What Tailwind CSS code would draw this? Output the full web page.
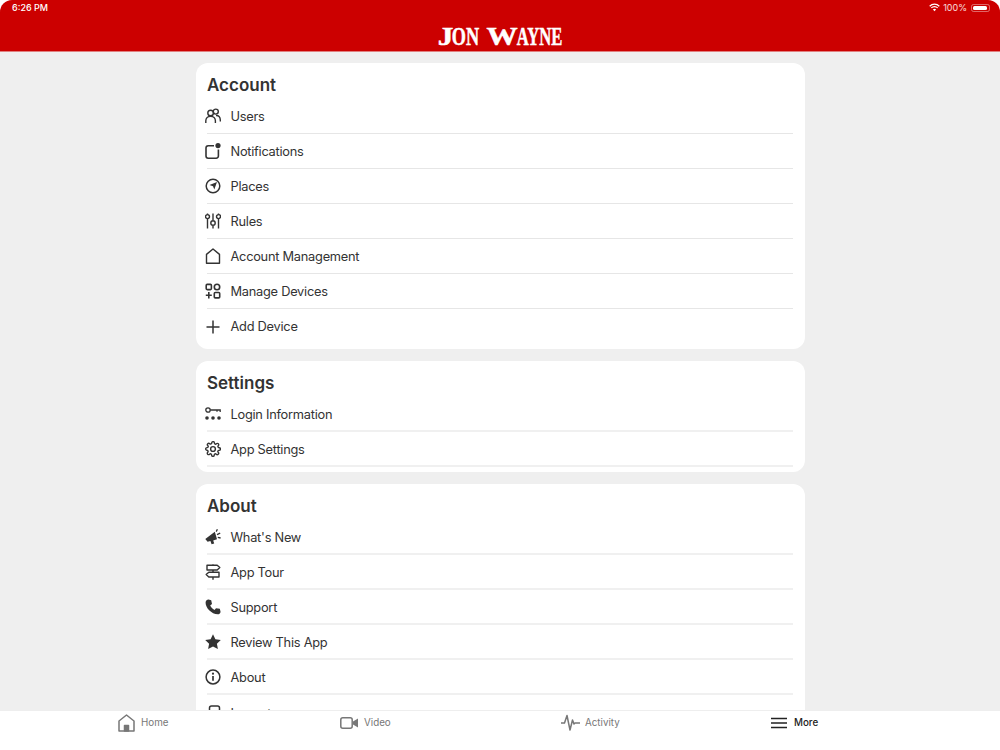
<!DOCTYPE html>
<html>
<head>
<meta charset="utf-8">
<script src="https://cdn.jsdelivr.net/npm/@tailwindcss/browser@4"></script>
</head>
<body class="bg-white">
<div class="w-[1000px] h-[750px] flex flex-col overflow-hidden font-['Inter',sans-serif] text-[#333333]">
  <header class="relative h-[52px] shrink-0 bg-[#cc0000] rounded-t-[12px] border-b border-[#e08080] text-white">
    <div class="flex justify-between items-center h-[14px] pt-[1px] pl-[12px] pr-[10px] text-[9px] font-medium">
      <span>6:26 PM</span>
      <div class="flex items-center gap-[3px]">
        <svg width="11" height="9" viewBox="0 0 11 9" fill="none" stroke="#fff" stroke-width="1.3"><path d="M.7 3.2a6.8 6.8 0 0 1 9.6 0M2.3 4.900a4.500 4.500 0 0 1 6.400 0"/><path d="M3.900 6.500a2.200 2.200 0 0 1 3.200 0L5.500 8.200z" fill="#fff" stroke="none"/></svg>
        <span class="font-normal text-white/85">100%</span>
        <div class="w-[19px] h-[8px] p-[1px] pr-[2px] rounded-[2.5px] border border-white/40 ml-[1px]"><div class="w-full h-full rounded-[1.5px] bg-white"></div></div>
      </div>
    </div>
    <div class="flex justify-center items-center mt-[11px] h-[24px] font-['Liberation_Serif',serif] font-bold text-[26px] leading-[24px] whitespace-nowrap [-webkit-text-stroke:0.5px_white]">
      <span class="w-[15px] flex justify-center"><span class="flex-none scale-x-[1.2]">J</span></span>
      <span class="w-[26px] flex justify-center"><span class="flex-none scale-x-[.7]">ON</span></span>
      <span class="w-[8px]"></span>
      <span class="w-[30px] flex justify-center"><span class="flex-none scale-x-[1.2]">W</span></span>
      <span class="w-[46px] flex justify-center"><span class="flex-none scale-x-[.64]">AYNE</span></span>
    </div>
  </header>

  <main class="flex-1 min-h-0 overflow-hidden bg-[#efefef] pt-[11px]">
    <div class="w-[609px] mx-auto flex flex-col gap-[12px]">

      <section class="bg-white rounded-[12px] px-[11px] pr-[12px] pb-[5px]">
        <h2 class="h-[36px] pt-[10px] pl-[.5px] text-[17px] leading-[24px] font-semibold">Account</h2>
        <div class="flex items-center h-[35px] border-b border-[#e6e6e6]">
          <svg class="w-[16px] h-[16px] mr-[10px] -ml-[2px] shrink-0" viewBox="0 0 16 16" fill="none" stroke="#333" stroke-width="1.4"><circle cx="5.600" cy="5" r="2.800"/><circle cx="10.800" cy="3.600" r="2.500"/><path d="M.8 15v-2.200c0-2.600 2-4.600 4.800-4.600s4.800 2 4.800 4.600V15M11 7.500c2.500-.3 4.300 1.600 4.300 4.500v1.600"/></svg>
          <span class="pt-[2px] text-[12.800px] tracking-[-0.25px]">Users</span>
        </div>
        <div class="flex items-center h-[35px] border-b border-[#e6e6e6]">
          <svg class="w-[16px] h-[16px] mr-[10px] -ml-[2px] shrink-0" viewBox="0 0 16 16" fill="none" stroke="#333" stroke-width="1.600"><path d="M9 2.800H3.200A2.200 2.200 0 0 0 1 5v8a2.200 2.200 0 0 0 2.200 2.200h8A2.200 2.200 0 0 0 13.400 13V6.500"/><circle cx="13" cy="2.600" r="2.600" fill="#333" stroke="none"/></svg>
          <span class="pt-[2px] text-[12.800px] tracking-[-0.25px]">Notifications</span>
        </div>
        <div class="flex items-center h-[35px] border-b border-[#e6e6e6]">
          <svg class="w-[16px] h-[16px] mr-[10px] -ml-[2px] shrink-0" viewBox="0 0 16 16" fill="none" stroke="#333" stroke-width="1.500"><circle cx="8" cy="8" r="6.800"/><path d="M12 4 9.300 11.500 8 8.200 4.500 7z" fill="#333" stroke="none"/></svg>
          <span class="pt-[2px] text-[12.800px] tracking-[-0.25px]">Places</span>
        </div>
        <div class="flex items-center h-[35px] border-b border-[#e6e6e6]">
          <svg class="w-[16px] h-[16px] mr-[10px] -ml-[2px] shrink-0" viewBox="0 0 16 16" fill="none" stroke="#333" stroke-width="1.400"><path d="M2.500 6V15.500M8 .5v6.500M8 13V15.500M13.500 6V15.500M2.500 .5v1M13.500 .5v1"/><circle cx="2.500" cy="3.600" r="2"/><circle cx="8" cy="10" r="2.200"/><circle cx="13.500" cy="3.600" r="2"/></svg>
          <span class="pt-[2px] text-[12.800px] tracking-[-0.25px]">Rules</span>
        </div>
        <div class="flex items-center h-[35px] border-b border-[#e6e6e6]">
          <svg class="w-[16px] h-[16px] mr-[10px] -ml-[2px] shrink-0" viewBox="0 0 16 16" fill="none" stroke="#333" stroke-width="1.400" stroke-linejoin="round"><path d="M1.500 15.200V6.400L8 1l6.500 5.400v8.800z"/></svg>
          <span class="pt-[2px] text-[12.800px] tracking-[-0.25px]">Account Management</span>
        </div>
        <div class="flex items-center h-[35px] border-b border-[#e6e6e6]">
          <svg class="w-[16px] h-[16px] mr-[10px] -ml-[2px] shrink-0" viewBox="0 0 16 16" fill="none" stroke="#333" stroke-width="1.600"><rect x="1.200" y="1.400" width="5.200" height="5.200" rx="1"/><circle cx="12" cy="4" r="2.700"/><rect x="9.300" y="9.500" width="5.400" height="5.400" rx="1"/><path d="M3.800 9v6.500M.8 12.200h6"/></svg>
          <span class="pt-[2px] text-[12.800px] tracking-[-0.25px]">Manage Devices</span>
        </div>
        <div class="flex items-center h-[35px]">
          <svg class="w-[16px] h-[16px] mr-[10px] -ml-[2px] shrink-0" viewBox="0 0 16 16" fill="none" stroke="#333" stroke-width="1.500"><path d="M8 1.500v13M1.500 8h13"/></svg>
          <span class="pt-[1px] text-[12.800px] tracking-[-0.25px]">Add Device</span>
        </div>
      </section>

      <section class="bg-white rounded-[12px] px-[11px] pr-[12px] pb-[5px]">
        <h2 class="h-[36px] pt-[10px] pl-[.5px] text-[17px] leading-[24px] font-semibold">Settings</h2>
        <div class="flex items-center h-[35px] border-b-2 border-[#f0f0f0]">
          <svg class="w-[16px] h-[16px] mr-[10px] -ml-[2px] shrink-0" viewBox="0 0 16 16" fill="none" stroke="#333" stroke-width="1.300"><circle cx="3" cy="4" r="2.200"/><path d="M5.200 4h10v2M12 4v1.800"/><g fill="#333" stroke="none"><circle cx="2" cy="12" r="1.800"/><circle cx="8" cy="12" r="1.800"/><circle cx="14" cy="12" r="1.800"/></g></svg>
          <span class="pt-[2px] text-[12.800px] tracking-[-0.25px]">Login Information</span>
        </div>
        <div class="flex items-center h-[35px] border-b-2 border-[#f0f0f0]">
          <svg class="w-[16px] h-[16px] mr-[10px] -ml-[2px] shrink-0" viewBox="0 0 24 24" fill="none" stroke="#333" stroke-width="2.100" stroke-linejoin="round"><circle cx="12" cy="12" r="3.600"/><path d="M19.400 15a1.700 1.700 0 0 0 .3 1.800l.1.100a2 2 0 1 1-2.900 2.900l-.1-.1a1.700 1.700 0 0 0-2.900 1.200V21a2 2 0 1 1-4 0v-.1a1.700 1.700 0 0 0-2.900-1.200l-.1.100a2 2 0 1 1-2.900-2.900l.1-.1a1.700 1.700 0 0 0-1.200-2.900H3a2 2 0 1 1 0-4h.1a1.700 1.700 0 0 0 1.200-2.900l-.1-.1a2 2 0 1 1 2.900-2.900l.1.100a1.700 1.700 0 0 0 2.900-1.200V3a2 2 0 1 1 4 0v.1a1.700 1.700 0 0 0 2.900 1.200l.1-.1a2 2 0 1 1 2.900 2.900l-.1.100a1.700 1.700 0 0 0 1.200 2.900h.1a2 2 0 1 1 0 4h-.1a1.700 1.700 0 0 0-1.700 1z"/></svg>
          <span class="pt-[2px] text-[12.800px] tracking-[-0.25px]">App Settings</span>
        </div>
      </section>

      <section class="bg-white rounded-[12px] px-[11px] pr-[12px] pb-[5px]">
        <h2 class="h-[36px] pt-[10px] pl-[.5px] text-[17px] leading-[24px] font-semibold">About</h2>
        <div class="flex items-center h-[35px] border-b-2 border-[#f0f0f0]">
          <svg class="w-[16px] h-[16px] mr-[10px] -ml-[2px] shrink-0" viewBox="0 0 16 16" fill="#333"><path d="M.3 10 9.800 2.800l2.200 7.400-3.800 1.200 1 3-2.600.9-1.200-3.400-2.800.9z"/><path d="M12 5.600l3.200-1.400M11.200 2.600l1.200-2.300M12.800 8.400l2.800.6" stroke="#333" stroke-width="1.300"/></svg>
          <span class="pt-[2px] text-[12.800px] tracking-[-0.25px]">What's New</span>
        </div>
        <div class="flex items-center h-[35px] border-b-2 border-[#f0f0f0]">
          <svg class="w-[16px] h-[16px] mr-[10px] -ml-[2px] shrink-0" viewBox="0 0 16 16" fill="none" stroke="#333" stroke-width="1.400" stroke-linejoin="round"><path d="M2 1.200h10.200L14.800 3.600l-2.600 2.400H2zM14 8.200H3.800L1.200 10.600l2.600 2.400H14zM8 .3v.9M8 6v2.200M8 13v2.700"/></svg>
          <span class="pt-[2px] text-[12.800px] tracking-[-0.25px]">App Tour</span>
        </div>
        <div class="flex items-center h-[35px] border-b-2 border-[#f0f0f0]">
          <svg class="w-[16px] h-[16px] mr-[10px] -ml-[2px] shrink-0" viewBox="0 0 16 16" fill="#333"><path d="M3.600.6 6.200 1.200 7 5 5.200 6.600C6 8.400 7.500 10 9.500 10.900L11 9.200l3.800.6.700 2.800c.2 1-.5 2.400-1.800 2.600C7 15.800.2 8.700.6 3.200.7 1.800 2.300.4 3.600.6z"/></svg>
          <span class="pt-[2px] text-[12.800px] tracking-[-0.25px]">Support</span>
        </div>
        <div class="flex items-center h-[35px] border-b-2 border-[#f0f0f0]">
          <svg class="w-[16px] h-[16px] mr-[10px] -ml-[2px] shrink-0" viewBox="0 0 16 16" fill="#333"><path d="m8 .3 2.400 4.900 5.400.7-3.900 3.800 1 5.400L8 12.500l-4.900 2.600 1-5.400L.2 5.900l5.400-.7z"/></svg>
          <span class="pt-[2px] text-[12.800px] tracking-[-0.25px]">Review This App</span>
        </div>
        <div class="flex items-center h-[35px] border-b-2 border-[#f0f0f0]">
          <svg class="w-[16px] h-[16px] mr-[10px] -ml-[2px] shrink-0" viewBox="0 0 16 16" fill="none" stroke="#333" stroke-width="1.500"><circle cx="8" cy="8" r="6.900"/><path d="M8 7v4.800" stroke-width="1.700"/><circle cx="8" cy="4.700" r="1.100" fill="#333" stroke="none"/></svg>
          <span class="pt-[2px] text-[12.800px] tracking-[-0.25px]">About</span>
        </div>
        <div class="flex items-center h-[35px]">
          <svg class="w-[16px] h-[16px] mr-[10px] -ml-[2px] shrink-0" viewBox="0 0 16 16" fill="none" stroke="#333" stroke-width="1.500"><path d="M4.500 5V3a2 2 0 0 1 2-2h6a2 2 0 0 1 2 2v10a2 2 0 0 1-2 2h-6a2 2 0 0 1-2-2v-2M.5 8h8M6 5.500 8.500 8 6 10.500"/></svg>
          <span class="pt-[2px] text-[12.800px] tracking-[-0.25px]">Logout</span>
        </div>
      </section>
    </div>
  </main>

  <nav class="h-[40px] shrink-0 bg-white border-t border-[#eeeeee] flex items-start pt-[2px] text-[9.800px] text-[#777777]">
    <div class="ml-[118px] w-[222px] flex items-center gap-[6px] h-[19px]">
      <svg class="w-[17px] h-[18px]" viewBox="0 0 17 18" fill="none" stroke="#777" stroke-width="1.500" stroke-linejoin="round"><path d="M1 17V7L8.500 1 16 7v10z"/><path d="M6.500 17v-5.500h4V17z" fill="#777"/></svg>
      <span class="pt-[2px]">Home</span>
    </div>
    <div class="w-[221px] flex items-center gap-[6px] h-[19px]">
      <svg class="w-[18px] h-[12px]" viewBox="0 0 18 12" fill="none" stroke="#777" stroke-width="1.500"><rect x=".8" y=".8" width="11.400" height="10.400" rx="2"/><path d="M13 4.500 18 1.500v9L13 7.500z" fill="#777" stroke="none"/></svg>
      <span class="pt-[2px]">Video</span>
    </div>
    <div class="w-[210px] flex items-center gap-[5px] h-[19px]">
      <svg class="w-[19px] h-[18px]" viewBox="0 0 19 18" fill="none" stroke="#777" stroke-width="1.500" stroke-linejoin="round"><path d="M0 9h3.500l2.500-7.500 3 14.500 2.500-10L13 10l1-1h5"/></svg>
      <span class="pt-[2px]">Activity</span>
    </div>
    <div class="flex items-center gap-[7px] h-[19px] text-[#222222] font-medium">
      <svg class="w-[16px] h-[12px]" viewBox="0 0 16 12" fill="none" stroke="#222" stroke-width="1.600"><path d="M0 1.500h16M0 6h16M0 10.500h16"/></svg>
      <span class="pt-[2px]">More</span>
    </div>
  </nav>
</div>
</body>
</html>
